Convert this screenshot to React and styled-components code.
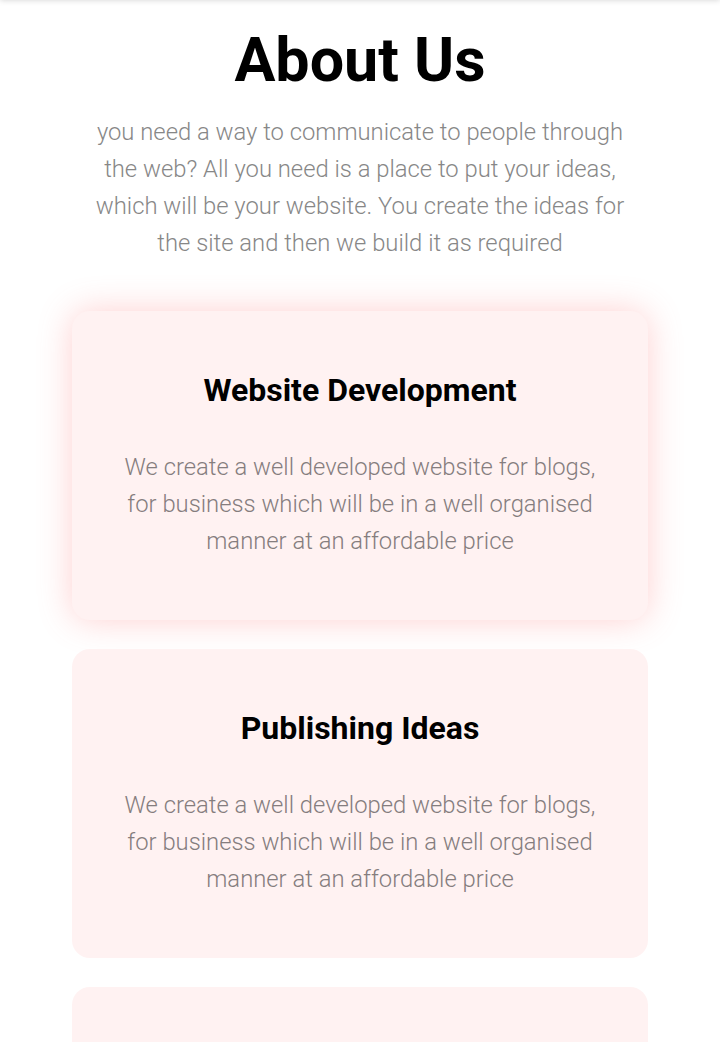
import React from "react";
import styled, { createGlobalStyle } from "styled-components";

const GlobalStyle = createGlobalStyle`
  * { box-sizing: border-box; }
  body {
    margin: 0;
    background: #ffffff;
    font-family: Roboto, "Liberation Sans", Arial, sans-serif;
    color: #000;
  }
`;

const HeaderEdge = styled.div`
  position: fixed;
  top: -40px;
  left: 0;
  right: 0;
  height: 40px;
  background: #fff;
  box-shadow: 0 0 6px rgba(0, 0, 0, 0.18);
  z-index: 10;
`;

const Section = styled.section`
  padding: 24px 0 40px;
  display: flex;
  flex-direction: column;
  align-items: center;
`;

const Title = styled.h1`
  margin: 0;
  font-size: 61px;
  font-weight: 700;
  line-height: 72px;
  text-align: center;
`;

const Intro = styled.p`
  margin: 18px 0 0;
  width: 545px;
  font-size: 23.8px;
  font-weight: 300;
  line-height: 37px;
  color: #878787;
  text-align: center;
`;

const CardList = styled.div`
  margin-top: 49px;
  width: 576px;
  display: flex;
  flex-direction: column;
  gap: 29px;
`;

const Card = styled.article`
  background: #fff2f2;
  border-radius: 18px;
  padding: 60px 48px 60px;
  text-align: center;
  box-shadow: ${(p) => (p.$active ? "0 0 34px rgba(255, 110, 110, 0.32)" : "none")};
`;

const CardTitle = styled.h3`
  margin: 0;
  font-size: 32px;
  font-weight: 700;
  line-height: 38px;
`;

const CardText = styled.p`
  margin: 40px 0 0;
  font-size: 23.8px;
  font-weight: 300;
  line-height: 37px;
  color: #857d7e;
`;

const services = [
  {
    title: "Website Development",
    text: "We create a well developed website for blogs, for business which will be in a well organised manner at an affordable price",
  },
  {
    title: "Publishing Ideas",
    text: "We create a well developed website for blogs, for business which will be in a well organised manner at an affordable price",
  },
  {
    title: "Hosting Services",
    text: "We create a well developed website for blogs, for business which will be in a well organised manner at an affordable price",
  },
];

export default function App() {
  return (
    <>
      <GlobalStyle />
      <HeaderEdge />
      <Section>
        <Title>About Us</Title>
        <Intro>
          you need a way to communicate to people through the web? All you need
          is a place to put your ideas, which will be your website. You create
          the ideas for the site and then we build it as required
        </Intro>
        <CardList>
          {services.map((s, i) => (
            <Card key={s.title} $active={i === 0}>
              <CardTitle>{s.title}</CardTitle>
              <CardText>{s.text}</CardText>
            </Card>
          ))}
        </CardList>
      </Section>
    </>
  );
}
